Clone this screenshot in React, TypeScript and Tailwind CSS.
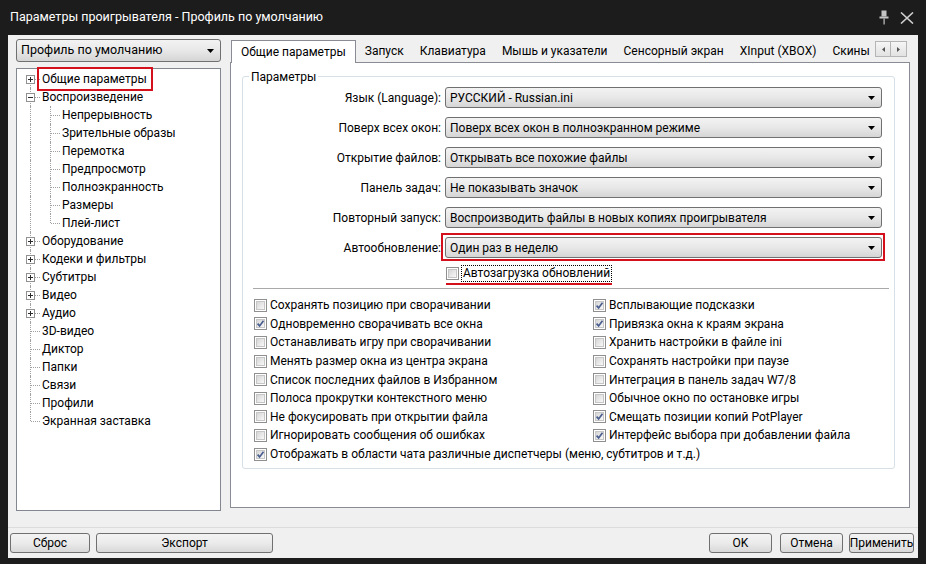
import React from 'react';

type TreeNode = { label: string; box?: 'plus' | 'minus'; mark?: boolean; children?: string[] };

const TREE: TreeNode[] = [
  { label: 'Общие параметры', box: 'plus', mark: true },
  {
    label: 'Воспроизведение',
    box: 'minus',
    children: ['Непрерывность', 'Зрительные образы', 'Перемотка', 'Предпросмотр', 'Полноэкранность', 'Размеры', 'Плей-лист'],
  },
  { label: 'Оборудование', box: 'plus' },
  { label: 'Кодеки и фильтры', box: 'plus' },
  { label: 'Субтитры', box: 'plus' },
  { label: 'Видео', box: 'plus' },
  { label: 'Аудио', box: 'plus' },
  { label: '3D-видео' },
  { label: 'Диктор' },
  { label: 'Папки' },
  { label: 'Связи' },
  { label: 'Профили' },
  { label: 'Экранная заставка' },
];

type Row = { label: string; level: number; box?: 'plus' | 'minus'; mark?: boolean; top: boolean; bottom: boolean };

const ROWS: Row[] = [];
TREE.forEach((n, i) => {
  const last = i === TREE.length - 1;
  ROWS.push({ label: n.label, level: 0, box: n.box, mark: n.mark, top: i > 0, bottom: !last });
  n.children?.forEach((c, j) => {
    ROWS.push({ label: c, level: 1, top: true, bottom: j < n.children!.length - 1 });
  });
});

const TABS = ['Общие параметры', 'Запуск', 'Клавиатура', 'Мышь и указатели', 'Сенсорный экран', 'XInput (XBOX)', 'Скины'];

const COMBOS = [
  { label: 'Язык (Language):', value: 'РУССКИЙ - Russian.ini' },
  { label: 'Поверх всех окон:', value: 'Поверх всех окон в полноэкранном режиме' },
  { label: 'Открытие файлов:', value: 'Открывать все похожие файлы' },
  { label: 'Панель задач:', value: 'Не показывать значок' },
  { label: 'Повторный запуск:', value: 'Воспроизводить файлы в новых копиях проигрывателя' },
  { label: 'Автообновление:', value: 'Один раз в неделю', mark: true },
];

// пары: левая колонка / правая колонка
const CHECKS: [string, boolean, string, boolean][] = [
  ['Сохранять позицию при сворачивании', false, 'Всплывающие подсказки', true],
  ['Одновременно сворачивать все окна', true, 'Привязка окна к краям экрана', true],
  ['Останавливать игру при сворачивании', false, 'Хранить настройки в файле ini', false],
  ['Менять размер окна из центра экрана', false, 'Сохранять настройки при паузе', false],
  ['Список последних файлов в Избранном', false, 'Интеграция в панель задач W7/8', false],
  ['Полоса прокрутки контекстного меню', false, 'Обычное окно по остановке игры', false],
  ['Не фокусировать при открытии файла', false, 'Смещать позиции копий PotPlayer', true],
  ['Игнорировать сообщения об ошибках', false, 'Интерфейс выбора при добавлении файла', true],
];

const Arrow = () => (
  <svg width="7" height="4" viewBox="0 0 7 4" className="shrink-0">
    <path d="M0 0 H7 L3.5 4 Z" fill="#000" />
  </svg>
);

const Combo: React.FC<{ value: string; className?: string }> = ({ value, className = '' }) => (
  <div
    className={`flex items-center rounded-[3px] border border-[#707070] bg-linear-to-b from-[#f3f3f3] via-[#e8e8e8] to-[#d5d5d5] pl-[4px] pr-[6px] ${className}`}
  >
    <span className="flex-1 truncate">{value}</span>
    <Arrow />
  </div>
);

const CheckBox: React.FC<{ checked?: boolean }> = ({ checked }) => (
  <span className="flex h-[13px] w-[13px] shrink-0 items-center justify-center border border-[#8f8f8f] bg-white">
    <span className="relative flex h-[9px] w-[9px] items-center justify-center border border-[#c6c6c6] bg-linear-to-br from-[#d6d6d6] to-[#f8f8f8]">
      {checked && (
        <svg width="9" height="9" viewBox="0 0 9 9" className="absolute -left-px -top-px">
          <path d="M1.6 4.6 L3.6 6.9 L7.5 1.8" stroke="#4a5e8f" strokeWidth="1.7" fill="none" />
        </svg>
      )}
    </span>
  </span>
);

const Check: React.FC<{ label: string; checked?: boolean; className?: string }> = ({ label, checked, className = '' }) => (
  <div className={`flex items-center gap-[3px] whitespace-nowrap ${className}`}>
    <CheckBox checked={checked} />
    <span>{label}</span>
  </div>
);

const Button: React.FC<{ label: string; className?: string }> = ({ label, className = '' }) => (
  <div
    className={`flex h-[20px] items-center justify-center rounded-[3px] border border-[#707070] bg-linear-to-b from-[#f3f3f3] via-[#ebebeb] to-[#d8d8d8] text-[12px] ${className}`}
  >
    {label}
  </div>
);

const Gutter: React.FC<{ top: boolean; bottom: boolean; branch?: boolean; box?: 'plus' | 'minus' }> = ({ top, bottom, branch, box }) => (
  <span className="relative h-full w-[20px] shrink-0">
    {top && bottom && <span className="absolute left-[10px] top-0 bottom-0 border-l border-dotted border-[#a0a0a0]" />}
    {top && !bottom && <span className="absolute left-[10px] top-0 h-[9px] border-l border-dotted border-[#a0a0a0]" />}
    {!top && bottom && <span className="absolute left-[10px] top-[9px] bottom-0 border-l border-dotted border-[#a0a0a0]" />}
    {branch && <span className="absolute left-[11px] right-0 top-[9px] border-t border-dotted border-[#a0a0a0]" />}
    {box && (
      <span className="absolute left-[6px] top-[5px] flex h-[9px] w-[9px] items-center justify-center border border-[#919191] bg-white">
        <span className="absolute h-px w-[5px] bg-[#2b2b2b]" />
        {box === 'plus' && <span className="absolute h-[5px] w-px bg-[#2b2b2b]" />}
      </span>
    )}
  </span>
);

export default function App() {
  return (
    <div className="flex h-[564px] w-[926px] flex-col bg-[#1c1c1c] font-['Roboto',sans-serif] text-black">
      {/* Заголовок окна */}
      <div className="flex h-[35px] shrink-0 items-center pl-[10px] pr-[12px] text-[12.5px] text-white">
        <span className="flex-1">Параметры проигрывателя - Профиль по умолчанию</span>
        <svg width="10" height="15" viewBox="0 0 10 15" className="mr-[11px]">
          <rect x="2.5" y="0.5" width="5" height="6" fill="#c4c4c4" />
          <rect x="0.5" y="6.5" width="9" height="2" fill="#c4c4c4" />
          <rect x="4.5" y="8.5" width="1.2" height="6" fill="#c4c4c4" />
        </svg>
        <svg width="14" height="12" viewBox="0 0 14 12">
          <path d="M1 0.5 L13 11.5 M13 0.5 L1 11.5" stroke="#cfcfcf" strokeWidth="1.6" />
        </svg>
      </div>

      <div className="mx-[8px] mb-[6px] flex flex-1 flex-col bg-[#f0f0f0]">
        <div className="flex gap-[9px] pl-[8px] pr-[8px] pt-[4px]">
          {/* Левая колонка */}
          <div className="flex w-[205px] shrink-0 flex-col gap-[6px]">
            <Combo value="Профиль по умолчанию" className="h-[23px] text-[12.5px]" />
            <div className="h-[443px] border border-[#828790] bg-white pl-[3px] pt-[1px] text-[12px]">
              {ROWS.map(r => (
                <div key={r.label} className="flex h-[18px] items-center">
                  {r.level === 1 && <Gutter top bottom />}
                  <Gutter top={r.top} bottom={r.bottom} branch box={r.box} />
                  <span className="relative ml-[2px] whitespace-nowrap leading-[18px]">
                    {r.label}
                    {r.mark && <span className="absolute -left-[5px] -right-[6px] -top-[3px] -bottom-[3px] border-2 border-[#d3101c]" />}
                  </span>
                </div>
              ))}
            </div>
          </div>

          {/* Вкладки */}
          <div className="flex min-w-0 flex-1 flex-col">
            <div className="flex h-[24px] items-start">
              <div className="flex h-full min-w-0 flex-1 overflow-hidden pl-[1px]">
                {TABS.map((t, i) =>
                  i === 0 ? (
                    <div
                      key={t}
                      className="relative z-10 mt-[1px] mr-[1px] flex h-[23px] shrink-0 items-center border border-b-0 border-[#898c95] bg-white px-[9px] text-[12px] whitespace-nowrap"
                    >
                      {t}
                    </div>
                  ) : (
                    <div key={t} className="flex h-[23px] shrink-0 items-center px-[8px] pt-[1px] text-[12px] whitespace-nowrap">
                      {t}
                    </div>
                  )
                )}
              </div>
              <div className="mr-[3px] mt-[2px] flex h-[16px] shrink-0">
                <div className="flex w-[16px] items-center justify-center border border-[#b5b5b5] bg-linear-to-b from-[#f6f6f6] to-[#e2e2e2]">
                  <svg width="3" height="5" viewBox="0 0 3 5"><path d="M3 0 V5 L0 2.5 Z" fill="#555" /></svg>
                </div>
                <div className="flex w-[16px] items-center justify-center border border-l-0 border-[#b5b5b5] bg-linear-to-b from-[#f6f6f6] to-[#e2e2e2]">
                  <svg width="3" height="5" viewBox="0 0 3 5"><path d="M0 0 V5 L3 2.5 Z" fill="#555" /></svg>
                </div>
              </div>
            </div>

            <div className="-mt-px h-[446px] border border-[#898c95] bg-white pl-[11px] pr-[14px] pt-[13px] text-[12px]">
              <div className="relative h-[393px] rounded-[3px] border border-[#d5dfe5]">
                <span className="absolute -top-[9px] left-[6px] bg-white px-[2px]">Параметры</span>

                <div className="flex flex-col gap-[9px] pr-[12px] pt-[10px]">
                  {COMBOS.map(c => (
                    <div key={c.label} className="flex h-[21px] items-center gap-[4px]">
                      <span className="w-[198px] shrink-0 text-right whitespace-nowrap">{c.label}</span>
                      <div className="relative h-full min-w-0 flex-1">
                        <Combo value={c.value} className="h-full" />
                        {c.mark && <span className="absolute -left-[4px] -right-[3px] -top-[4px] -bottom-[3px] border-2 border-[#d3101c]" />}
                      </div>
                    </div>
                  ))}
                </div>

                <div className="ml-[203px] mt-[7px] flex h-[20px] items-start">
                  <div className="flex items-center gap-[2px] border-b-2 border-[#d3101c] pb-px">
                    <CheckBox />
                    <span className="border border-dotted border-black px-px leading-[15px]">Автозагрузка обновлений</span>
                  </div>
                </div>

                <div className="ml-[10px] mr-[5px] mt-[3px] border-t border-[#a9a9a9]" />

                <div className="mt-[7px] grid auto-rows-[18.6px] grid-cols-[339px_1fr] items-center pl-[11px]">
                  {CHECKS.map(([l, lc, r, rc]) => (
                    <React.Fragment key={l}>
                      <Check label={l} checked={lc} />
                      <Check label={r} checked={rc} />
                    </React.Fragment>
                  ))}
                  <Check
                    label="Отображать в области чата различные диспетчеры (меню, субтитров и т.д.)"
                    checked
                    className="col-span-2"
                  />
                </div>
              </div>
            </div>
          </div>
        </div>

        {/* Нижняя панель кнопок */}
        <div className="mt-auto flex border-t border-[#dcdcdc] pb-[5px] pl-[2px] pr-[4px] pt-[5px]">
          <Button label="Сброс" className="w-[80px]" />
          <Button label="Экспорт" className="ml-[6px] w-[177px]" />
          <Button label="OK" className="ml-auto w-[63px]" />
          <Button label="Отмена" className="ml-[8px] w-[63px]" />
          <Button label="Применить" className="ml-[6px] w-[65px]" />
        </div>
      </div>
    </div>
  );
}
